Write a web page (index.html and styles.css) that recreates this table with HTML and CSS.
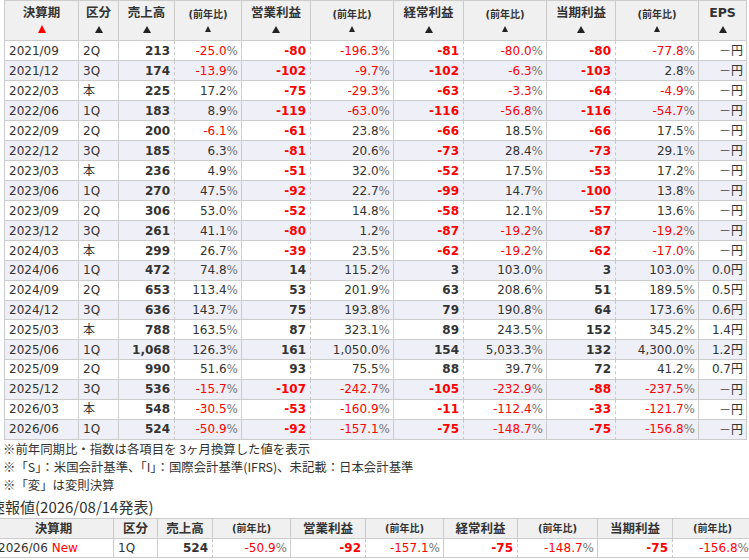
FILE: index.html
```html
<!DOCTYPE html>
<html lang="ja">
<head>
<meta charset="utf-8">
<title>業績推移</title>
<link rel="stylesheet" href="styles.css">
</head>
<body>
<table class="main">
  <colgroup>
    <col class="w74"><col class="w40"><col class="w56"><col class="w67"><col class="w69"><col class="w83"><col class="w70"><col class="w83"><col class="w69"><col class="w83"><col class="w48">
  </colgroup>
  <thead>
    <tr>
      <th><span class="lbl">決算期</span><span class="tri red"></span></th>
      <th><span class="lbl">区分</span><span class="tri"></span></th>
      <th><span class="lbl">売上高</span><span class="tri"></span></th>
      <th><span class="lbl sm">(前年比)</span><span class="tri small"></span></th>
      <th><span class="lbl">営業利益</span><span class="tri"></span></th>
      <th><span class="lbl sm">(前年比)</span><span class="tri small"></span></th>
      <th><span class="lbl">経常利益</span><span class="tri"></span></th>
      <th><span class="lbl sm">(前年比)</span><span class="tri small"></span></th>
      <th><span class="lbl">当期利益</span><span class="tri"></span></th>
      <th><span class="lbl sm">(前年比)</span><span class="tri small"></span></th>
      <th><span class="lbl">EPS</span><span class="tri"></span></th>
    </tr>
  </thead>
  <tbody>
    <tr><td class="d">2021/09</td><td class="k">2Q</td><td class="v">213</td><td class="p n">-25.0<span class="u">%</span></td><td class="v n">-80</td><td class="p n">-196.3<span class="u">%</span></td><td class="v n">-81</td><td class="p n">-80.0<span class="u">%</span></td><td class="v n">-80</td><td class="p n">-77.8<span class="u">%</span></td><td class="e"><span class="dash">－</span>円</td></tr>
    <tr><td class="d">2021/12</td><td class="k">3Q</td><td class="v">174</td><td class="p n">-13.9<span class="u">%</span></td><td class="v n">-102</td><td class="p n">-9.7<span class="u">%</span></td><td class="v n">-102</td><td class="p n">-6.3<span class="u">%</span></td><td class="v n">-103</td><td class="p">2.8<span class="u">%</span></td><td class="e"><span class="dash">－</span>円</td></tr>
    <tr><td class="d">2022/03</td><td class="k">本</td><td class="v">225</td><td class="p">17.2<span class="u">%</span></td><td class="v n">-75</td><td class="p n">-29.3<span class="u">%</span></td><td class="v n">-63</td><td class="p n">-3.3<span class="u">%</span></td><td class="v n">-64</td><td class="p n">-4.9<span class="u">%</span></td><td class="e"><span class="dash">－</span>円</td></tr>
    <tr><td class="d">2022/06</td><td class="k">1Q</td><td class="v">183</td><td class="p">8.9<span class="u">%</span></td><td class="v n">-119</td><td class="p n">-63.0<span class="u">%</span></td><td class="v n">-116</td><td class="p n">-56.8<span class="u">%</span></td><td class="v n">-116</td><td class="p n">-54.7<span class="u">%</span></td><td class="e"><span class="dash">－</span>円</td></tr>
    <tr><td class="d">2022/09</td><td class="k">2Q</td><td class="v">200</td><td class="p n">-6.1<span class="u">%</span></td><td class="v n">-61</td><td class="p">23.8<span class="u">%</span></td><td class="v n">-66</td><td class="p">18.5<span class="u">%</span></td><td class="v n">-66</td><td class="p">17.5<span class="u">%</span></td><td class="e"><span class="dash">－</span>円</td></tr>
    <tr><td class="d">2022/12</td><td class="k">3Q</td><td class="v">185</td><td class="p">6.3<span class="u">%</span></td><td class="v n">-81</td><td class="p">20.6<span class="u">%</span></td><td class="v n">-73</td><td class="p">28.4<span class="u">%</span></td><td class="v n">-73</td><td class="p">29.1<span class="u">%</span></td><td class="e"><span class="dash">－</span>円</td></tr>
    <tr><td class="d">2023/03</td><td class="k">本</td><td class="v">236</td><td class="p">4.9<span class="u">%</span></td><td class="v n">-51</td><td class="p">32.0<span class="u">%</span></td><td class="v n">-52</td><td class="p">17.5<span class="u">%</span></td><td class="v n">-53</td><td class="p">17.2<span class="u">%</span></td><td class="e"><span class="dash">－</span>円</td></tr>
    <tr><td class="d">2023/06</td><td class="k">1Q</td><td class="v">270</td><td class="p">47.5<span class="u">%</span></td><td class="v n">-92</td><td class="p">22.7<span class="u">%</span></td><td class="v n">-99</td><td class="p">14.7<span class="u">%</span></td><td class="v n">-100</td><td class="p">13.8<span class="u">%</span></td><td class="e"><span class="dash">－</span>円</td></tr>
    <tr><td class="d">2023/09</td><td class="k">2Q</td><td class="v">306</td><td class="p">53.0<span class="u">%</span></td><td class="v n">-52</td><td class="p">14.8<span class="u">%</span></td><td class="v n">-58</td><td class="p">12.1<span class="u">%</span></td><td class="v n">-57</td><td class="p">13.6<span class="u">%</span></td><td class="e"><span class="dash">－</span>円</td></tr>
    <tr><td class="d">2023/12</td><td class="k">3Q</td><td class="v">261</td><td class="p">41.1<span class="u">%</span></td><td class="v n">-80</td><td class="p">1.2<span class="u">%</span></td><td class="v n">-87</td><td class="p n">-19.2<span class="u">%</span></td><td class="v n">-87</td><td class="p n">-19.2<span class="u">%</span></td><td class="e"><span class="dash">－</span>円</td></tr>
    <tr><td class="d">2024/03</td><td class="k">本</td><td class="v">299</td><td class="p">26.7<span class="u">%</span></td><td class="v n">-39</td><td class="p">23.5<span class="u">%</span></td><td class="v n">-62</td><td class="p n">-19.2<span class="u">%</span></td><td class="v n">-62</td><td class="p n">-17.0<span class="u">%</span></td><td class="e"><span class="dash">－</span>円</td></tr>
    <tr><td class="d">2024/06</td><td class="k">1Q</td><td class="v">472</td><td class="p">74.8<span class="u">%</span></td><td class="v">14</td><td class="p">115.2<span class="u">%</span></td><td class="v">3</td><td class="p">103.0<span class="u">%</span></td><td class="v">3</td><td class="p">103.0<span class="u">%</span></td><td class="e">0.0円</td></tr>
    <tr><td class="d">2024/09</td><td class="k">2Q</td><td class="v">653</td><td class="p">113.4<span class="u">%</span></td><td class="v">53</td><td class="p">201.9<span class="u">%</span></td><td class="v">63</td><td class="p">208.6<span class="u">%</span></td><td class="v">51</td><td class="p">189.5<span class="u">%</span></td><td class="e">0.5円</td></tr>
    <tr><td class="d">2024/12</td><td class="k">3Q</td><td class="v">636</td><td class="p">143.7<span class="u">%</span></td><td class="v">75</td><td class="p">193.8<span class="u">%</span></td><td class="v">79</td><td class="p">190.8<span class="u">%</span></td><td class="v">64</td><td class="p">173.6<span class="u">%</span></td><td class="e">0.6円</td></tr>
    <tr><td class="d">2025/03</td><td class="k">本</td><td class="v">788</td><td class="p">163.5<span class="u">%</span></td><td class="v">87</td><td class="p">323.1<span class="u">%</span></td><td class="v">89</td><td class="p">243.5<span class="u">%</span></td><td class="v">152</td><td class="p">345.2<span class="u">%</span></td><td class="e">1.4円</td></tr>
    <tr><td class="d">2025/06</td><td class="k">1Q</td><td class="v">1,068</td><td class="p">126.3<span class="u">%</span></td><td class="v">161</td><td class="p">1,050.0<span class="u">%</span></td><td class="v">154</td><td class="p">5,033.3<span class="u">%</span></td><td class="v">132</td><td class="p">4,300.0<span class="u">%</span></td><td class="e">1.2円</td></tr>
    <tr><td class="d">2025/09</td><td class="k">2Q</td><td class="v">990</td><td class="p">51.6<span class="u">%</span></td><td class="v">93</td><td class="p">75.5<span class="u">%</span></td><td class="v">88</td><td class="p">39.7<span class="u">%</span></td><td class="v">72</td><td class="p">41.2<span class="u">%</span></td><td class="e">0.7円</td></tr>
    <tr><td class="d">2025/12</td><td class="k">3Q</td><td class="v">536</td><td class="p n">-15.7<span class="u">%</span></td><td class="v n">-107</td><td class="p n">-242.7<span class="u">%</span></td><td class="v n">-105</td><td class="p n">-232.9<span class="u">%</span></td><td class="v n">-88</td><td class="p n">-237.5<span class="u">%</span></td><td class="e"><span class="dash">－</span>円</td></tr>
    <tr><td class="d">2026/03</td><td class="k">本</td><td class="v">548</td><td class="p n">-30.5<span class="u">%</span></td><td class="v n">-53</td><td class="p n">-160.9<span class="u">%</span></td><td class="v n">-11</td><td class="p n">-112.4<span class="u">%</span></td><td class="v n">-33</td><td class="p n">-121.7<span class="u">%</span></td><td class="e"><span class="dash">－</span>円</td></tr>
    <tr><td class="d">2026/06</td><td class="k">1Q</td><td class="v">524</td><td class="p n">-50.9<span class="u">%</span></td><td class="v n">-92</td><td class="p n">-157.1<span class="u">%</span></td><td class="v n">-75</td><td class="p n">-148.7<span class="u">%</span></td><td class="v n">-75</td><td class="p n">-156.8<span class="u">%</span></td><td class="e"><span class="dash">－</span>円</td></tr>
  </tbody>
</table>

<div class="notes">
  <p>※前年同期比・指数は各項目を 3ヶ月換算した値を表示</p>
  <p>※「S」：米国会計基準、「I」：国際会計基準(IFRS)、未記載：日本会計基準</p>
  <p>※「変」は変則決算</p>
</div>

<section class="flash">
  <h2 class="flash-title">速報値(2026/08/14発表)</h2>
  <table class="sub">
    <colgroup>
      <col class="w120"><col class="w44"><col class="w55"><col class="w78"><col class="w75"><col class="w78"><col class="w74"><col class="w80"><col class="w75"><col class="w80">
    </colgroup>
    <thead>
      <tr>
        <th>決算期</th>
        <th>区分</th>
        <th>売上高</th>
        <th class="sm">(前年比)</th>
        <th>営業利益</th>
        <th class="sm">(前年比)</th>
        <th>経常利益</th>
        <th class="sm">(前年比)</th>
        <th>当期利益</th>
        <th class="sm">(前年比)</th>
      </tr>
    </thead>
    <tbody>
      <tr><td class="d">2026/06 <span class="new">New</span></td><td class="k">1Q</td><td class="v">524</td><td class="p n">-50.9<span class="u">%</span></td><td class="v n">-92</td><td class="p n">-157.1<span class="u">%</span></td><td class="v n">-75</td><td class="p n">-148.7<span class="u">%</span></td><td class="v n">-75</td><td class="p n">-156.8<span class="u">%</span></td></tr>
    </tbody>
  </table>
</section>
</body>
</html>
```

FILE: styles.css
```css
* { box-sizing: border-box; }

html, body {
  margin: 0;
  padding: 0;
  background: #fff;
  overflow: hidden;
}

body {
  width: 749px;
  height: 560px;
  font-family: "DejaVu Sans", "Noto Sans CJK JP", sans-serif;
  font-size: 12px;
  color: #333;
}

table {
  border-collapse: separate;
  border-spacing: 0;
  table-layout: fixed;
}

th, td {
  padding: 0 4px;
  border-right: 1px solid #ccc;
  border-bottom: 1px solid #ccc;
  white-space: nowrap;
  overflow: hidden;
}

th {
  background: #f0f0f0;
  font-weight: bold;
  text-align: center;
  vertical-align: top;
}

/* column widths */
.w40 { width: 40px; }
.w44 { width: 44px; }
.w48 { width: 48px; }
.w55 { width: 55px; }
.w56 { width: 56px; }
.w67 { width: 67px; }
.w69 { width: 69px; }
.w70 { width: 70px; }
.w74 { width: 74px; }
.w75 { width: 75px; }
.w78 { width: 78px; }
.w80 { width: 80px; }
.w83 { width: 83px; }
.w120 { width: 120px; }

/* main table */
.main {
  width: 743px;
  margin-left: 4px;
  border-left: 1px solid #ccc;
  border-top: 1px solid #ccc;
}

.main th {
  height: 40px;
  padding-top: 4px;
}

.main td {
  height: 19.8px;
  line-height: 18px;
}

.main tbody tr:nth-child(even) td {
  background: #efeff7;
}

.lbl {
  display: block;
  height: 16px;
  line-height: 16px;
  font-size: 12.5px;
}

.lbl.sm {
  font-size: 10px;
  padding-top: 2px;
}

.tri {
  display: inline-block;
  width: 0;
  height: 0;
  margin-top: 5px;
  border-left: 4px solid transparent;
  border-right: 4px solid transparent;
  border-bottom: 7px solid #222;
  vertical-align: top;
}

.tri.red {
  border-left-width: 4.5px;
  border-right-width: 4.5px;
  border-bottom: 8px solid #ff0000;
  margin-top: 4px;
}

.tri.small {
  border-left-width: 3.5px;
  border-right-width: 3.5px;
  border-bottom-width: 6px;
}

.d, .k { text-align: left; }

.v {
  text-align: right;
  font-weight: bold;
  border-right: 1px dashed #c8c8c8;
}

.p, .e { text-align: right; padding-right: 3px; }

.n { color: #ff0000; }

.u { color: #777; }

.dash {
  font-family: "Noto Sans CJK JP", sans-serif;
  color: #444;
}

/* notes */
.notes {
  margin: 0 0 0 3px;
  font-family: "Noto Sans CJK JP", sans-serif;
  font-size: 12.4px;
  line-height: 18px;
  color: #333;
}

.notes p { margin: 0; }

/* flash report */
.flash {
  margin: 2px 0 0 -10px;
}

.flash-title {
  margin: 0;
  font-family: "Noto Sans CJK JP", sans-serif;
  font-size: 15px;
  font-weight: normal;
  line-height: 22px;
  color: #333;
}

.sub {
  width: 760px;
  margin-left: 3px;
  border-left: 1px solid #ccc;
  border-top: 1px solid #ccc;
}

.sub th {
  height: 20px;
  line-height: 19px;
  font-size: 12.5px;
  vertical-align: middle;
}

.sub th.sm { font-size: 10px; }

.sub td {
  height: 19px;
  line-height: 18px;
}

.new { color: #ff0000; }
```
